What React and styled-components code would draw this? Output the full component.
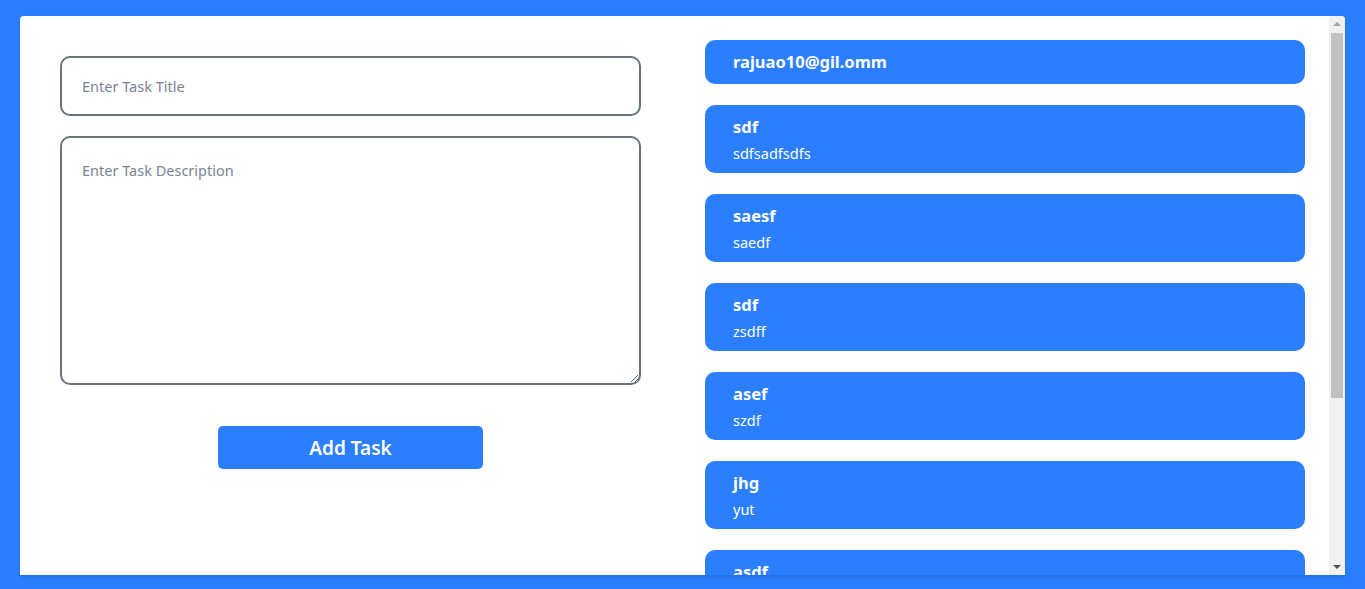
import React from "react";
import styled, { createGlobalStyle } from "styled-components";

const GlobalStyle = createGlobalStyle`
  html, body {
    margin: 0;
    padding: 0;
    height: 100%;
    overflow: hidden;
  }
  body {
    background: #2b7fff;
    font-family: "Noto Sans", "Open Sans", sans-serif;
  }
  * { box-sizing: border-box; }
`;

const Page = styled.div`
  height: 100vh;
  padding: 16px 20px 14px 20px;
  display: flex;
`;

const Panel = styled.main`
  flex: 1;
  background: #ffffff;
  border-radius: 4px 4px 0 0;
  box-shadow: 0 2px 4px rgba(0, 0, 0, 0.15);
  overflow: hidden;
  display: flex;
`;

const Content = styled.div`
  flex: 1;
  overflow: hidden;
  display: flex;
  align-items: flex-start;
  gap: 64px;
  padding: 24px 24px 24px 40px;
`;

const ScrollBar = styled.div`
  width: 16px;
  flex-shrink: 0;
  background: #f1f1f1;
  display: flex;
  flex-direction: column;
`;

const ArrowButton = styled.div`
  height: 17px;
  flex-shrink: 0;
  display: flex;
  align-items: center;
  justify-content: center;
`;

const Arrow = styled.span`
  width: 0;
  height: 0;
  border-left: 4px solid transparent;
  border-right: 4px solid transparent;
  ${(p) =>
    p.$down
      ? "border-top: 4px solid #505050; margin-top: 1px;"
      : "border-bottom: 4px solid #a3a3a3; margin-bottom: 1px;"}
`;

const Track = styled.div`
  flex: 1;
  padding: 0 2px 0 2px;
`;

const Thumb = styled.div`
  height: 365px;
  background: #c1c1c1;
`;

const Form = styled.form`
  width: 581px;
  flex-shrink: 0;
  padding-top: 16px;
  display: flex;
  flex-direction: column;
  align-items: center;
  gap: 20px;
`;

const fieldBase = `
  width: 100%;
  border: 2px solid #6a7282;
  border-radius: 10px;
  font-family: "Noto Sans", "Open Sans", sans-serif;
  font-size: 14.5px;
  color: #1e2939;
  padding: 0 20px;
  outline: none;
  background: #fff;
  &::placeholder { color: #7b8494; }
`;

const TitleInput = styled.input`
  ${fieldBase}
  height: 60px;
`;

const DescArea = styled.textarea`
  ${fieldBase}
  height: 249px;
  padding-top: 22px;
  resize: vertical;
  line-height: 1.4;
`;

const AddButton = styled.button`
  margin-top: 21px;
  width: 265px;
  height: 43px;
  border: none;
  border-radius: 5px;
  background: #2b7fff;
  color: #fff;
  font-family: "Noto Sans", "Open Sans", sans-serif;
  font-weight: 600;
  font-size: 19px;
  cursor: pointer;
`;

const List = styled.ul`
  list-style: none;
  margin: 0;
  padding: 0;
  width: 600px;
  flex-shrink: 0;
  display: flex;
  flex-direction: column;
  gap: 21px;
`;

const Card = styled.li`
  background: #2b7fff;
  color: #fff;
  border-radius: 10px;
  padding: ${(p) => (p.$header ? "0 28px" : "11px 28px 0 28px")};
  height: ${(p) => (p.$header ? "44px" : "68px")};
  flex-shrink: 0;
  display: flex;
  flex-direction: column;
  justify-content: ${(p) => (p.$header ? "center" : "flex-start")};
`;

const CardTitle = styled.div`
  font-weight: 700;
  font-size: 16.5px;
  line-height: 22px;
`;

const CardDesc = styled.div`
  font-size: 14.5px;
  line-height: 22px;
  margin-top: 4px;
`;

const tasks = [
  { title: "sdf", desc: "sdfsadfsdfs" },
  { title: "saesf", desc: "saedf" },
  { title: "sdf", desc: "zsdff" },
  { title: "asef", desc: "szdf" },
  { title: "jhg", desc: "yut" },
  { title: "asdf", desc: "asdf" },
  { title: "dfg", desc: "dfgdfg" },
  { title: "qwe", desc: "qwerty" },
];

export default function App() {
  return (
    <>
      <GlobalStyle />
      <Page>
        <Panel>
          <Content>
            <Form onSubmit={(e) => e.preventDefault()}>
              <TitleInput placeholder="Enter Task Title" />
              <DescArea placeholder="Enter Task Description" />
              <AddButton type="submit">Add Task</AddButton>
            </Form>
            <List>
              <Card $header>
                <CardTitle>rajuao10@gil.omm</CardTitle>
              </Card>
              {tasks.map((t, i) => (
                <Card key={i}>
                  <CardTitle>{t.title}</CardTitle>
                  <CardDesc>{t.desc}</CardDesc>
                </Card>
              ))}
            </List>
          </Content>
          <ScrollBar aria-hidden="true">
            <ArrowButton>
              <Arrow />
            </ArrowButton>
            <Track>
              <Thumb />
            </Track>
            <ArrowButton>
              <Arrow $down />
            </ArrowButton>
          </ScrollBar>
        </Panel>
      </Page>
    </>
  );
}
